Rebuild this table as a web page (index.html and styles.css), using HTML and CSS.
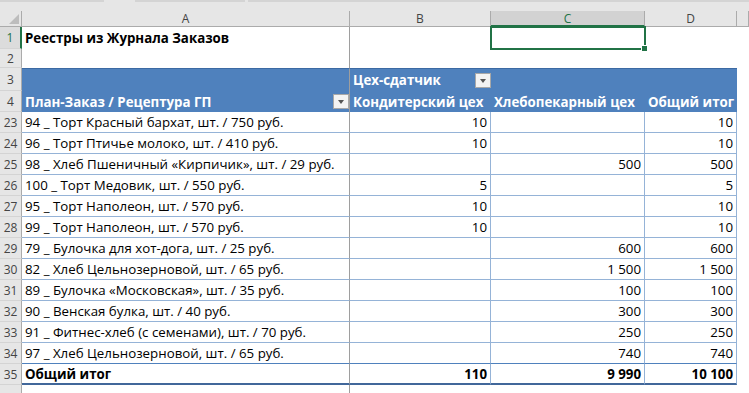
FILE: index.html
```html
<!DOCTYPE html>
<html lang="ru">
<head>
<meta charset="UTF-8" />
<title>Реестры из Журнала Заказов</title>
<link rel="stylesheet" href="styles.css">
</head>
<body>
<div class="topbar">
  <span class="seg s1"></span><span class="seg s2"></span><span class="seg s3"></span>
</div>

<div class="sheet">
  <!-- column headers -->
  <div class="corner"><svg width="22" height="16" viewBox="0 0 22 16"><polygon points="19,3 19,13 9,13" fill="#bdbdbd"/></svg></div>
  <div class="ch">A</div>
  <div class="ch">B</div>
  <div class="ch sel-col">C</div>
  <div class="ch">D</div>
  <div class="ch"></div>

  <!-- row 1 -->
  <div class="rh sel-row">1</div>
  <div class="c a title">Реестры из Журнала Заказов</div>
  <div class="c"></div>
  <div class="c cur"><div class="selbox"></div></div>
  <div class="c"></div>
  <div class="c"></div>

  <!-- row 2 -->
  <div class="rh">2</div>
  <div class="c a"></div>
  <div class="c"></div>
  <div class="c"></div>
  <div class="c"></div>
  <div class="c"></div>

  <!-- row 3 -->
  <div class="rh">3</div>
  <div class="c a hd top"></div>
  <div class="c hd top flt-cell">Цех-сдатчик<span class="flt"></span></div>
  <div class="c hd top"></div>
  <div class="c hd top"></div>
  <div class="c"></div>

  <!-- row 4 -->
  <div class="rh">4</div>
  <div class="c a hd flt-cell">План-Заказ / Рецептура ГП<span class="flt"></span></div>
  <div class="c hd">Кондитерский цех</div>
  <div class="c hd">Хлебопекарный цех</div>
  <div class="c hd">Общий итог</div>
  <div class="c"></div>

  <div class="rh">23</div>
  <div class="c a d">94 _ Торт Красный бархат, шт. / 750 руб.</div>
  <div class="c d n">10</div><div class="c d n"></div><div class="c d n">10</div><div class="c"></div>

  <div class="rh">24</div>
  <div class="c a d">96 _ Торт Птичье молоко, шт. / 410 руб.</div>
  <div class="c d n">10</div><div class="c d n"></div><div class="c d n">10</div><div class="c"></div>

  <div class="rh">25</div>
  <div class="c a d">98 _ Хлеб Пшеничный «Кирпичик», шт. / 29 руб.</div>
  <div class="c d n"></div><div class="c d n">500</div><div class="c d n">500</div><div class="c"></div>

  <div class="rh">26</div>
  <div class="c a d">100 _ Торт Медовик, шт. / 550 руб.</div>
  <div class="c d n">5</div><div class="c d n"></div><div class="c d n">5</div><div class="c"></div>

  <div class="rh">27</div>
  <div class="c a d">95 _ Торт Наполеон, шт. / 570 руб.</div>
  <div class="c d n">10</div><div class="c d n"></div><div class="c d n">10</div><div class="c"></div>

  <div class="rh">28</div>
  <div class="c a d">99 _ Торт Наполеон, шт. / 570 руб.</div>
  <div class="c d n">10</div><div class="c d n"></div><div class="c d n">10</div><div class="c"></div>

  <div class="rh">29</div>
  <div class="c a d">79 _ Булочка для хот-дога, шт. / 25 руб.</div>
  <div class="c d n"></div><div class="c d n">600</div><div class="c d n">600</div><div class="c"></div>

  <div class="rh">30</div>
  <div class="c a d">82 _ Хлеб Цельнозерновой, шт. / 65 руб.</div>
  <div class="c d n"></div><div class="c d n">1&nbsp;500</div><div class="c d n">1&nbsp;500</div><div class="c"></div>

  <div class="rh">31</div>
  <div class="c a d">89 _ Булочка «Московская», шт. / 35 руб.</div>
  <div class="c d n"></div><div class="c d n">100</div><div class="c d n">100</div><div class="c"></div>

  <div class="rh">32</div>
  <div class="c a d">90 _ Венская булка, шт. / 40 руб.</div>
  <div class="c d n"></div><div class="c d n">300</div><div class="c d n">300</div><div class="c"></div>

  <div class="rh">33</div>
  <div class="c a d">91 _ Фитнес-хлеб (с семенами), шт. / 70 руб.</div>
  <div class="c d n"></div><div class="c d n">250</div><div class="c d n">250</div><div class="c"></div>

  <div class="rh">34</div>
  <div class="c a d last">97 _ Хлеб Цельнозерновой, шт. / 65 руб.</div>
  <div class="c d n last"></div><div class="c d n last">740</div><div class="c d n last">740</div><div class="c"></div>

  <div class="rh">35</div>
  <div class="c a d total">Общий итог</div>
  <div class="c d n total">110</div><div class="c d n total">9&nbsp;990</div><div class="c d n total">10&nbsp;100</div><div class="c"></div>

  <div class="rh"></div>
  <div class="c a"></div>
  <div class="c"></div><div class="c"></div><div class="c"></div><div class="c"></div>
</div>
</body>
</html>
```

FILE: styles.css
```css
body {
  margin: 0;
  background: #fff;
  font-family: "Open Sans", "Liberation Sans", sans-serif;
  font-size: 13.3px;
  color: #000;
  overflow: hidden;
}
.topbar {
  height: 11px;
  background: #e6e6e6;
  display: flex;
  align-items: flex-start;
}
.seg {
  height: 2px;
  background: #d4d4d4;
}
.s1 { width: 104px; margin-right: 31px; }
.s2 { width: 110px; margin-right: 3px; }
.s3 { flex: 1; }

.sheet {
  display: grid;
  grid-template-columns: 22px 328px 141px 154px 92px 12px;
  grid-template-rows: 16px 22px 19px 23px 21px repeat(12, 21px) 21px 12px;
}
.sheet > div {
  box-sizing: border-box;
}
.corner {
  background: #e6e6e6;
  border-right: 1px solid #ababab;
  border-bottom: 1px solid #ababab;
}
.corner svg {
  display: block;
}
.ch {
  background: #e6e6e6;
  border-right: 1px solid #ababab;
  border-bottom: 1px solid #ababab;
  font-size: 12px;
  color: #444;
  display: flex;
  align-items: center;
  justify-content: center;
}
.ch.sel-col {
  background: #d2d2d2;
  color: #217346;
  border-bottom: 2px solid #217346;
}
.rh {
  background: #e6e6e6;
  border-right: 1px solid #ababab;
  border-bottom: 1px solid #d4d4d4;
  font-size: 12px;
  color: #444;
  display: flex;
  align-items: center;
  justify-content: center;
}
.rh.sel-row {
  background: #dcdcdc;
  color: #217346;
  border-right: 2px solid #217346;
}

.c {
  display: flex;
  align-items: center;
  padding: 0 3px;
  white-space: nowrap;
  overflow: hidden;
}
.a {
  border-right: 1px solid #9e9e9e;
}
.title {
  font-weight: bold;
}
.cur {
  position: relative;
  overflow: visible !important;
}
.selbox {
  position: absolute;
  top: -1px;
  left: -1px;
  right: -1px;
  bottom: -1px;
  border: 2px solid #217346;
}
.selbox::after {
  content: "";
  position: absolute;
  right: -4px;
  bottom: -4px;
  width: 5px;
  height: 5px;
  background: #217346;
  border: 1px solid #fff;
}

.hd {
  background: #4f81bd;
  color: #fff;
  font-weight: bold;
}
.hd.top {
  border-top: 1px solid #3c6aa3;
}
.flt-cell {
  padding-right: 0;
}
.flt {
  margin-left: auto;
  width: 16px;
  height: 15px;
  box-sizing: border-box;
  background: #f3f3f3;
  border: 1px solid #a8a8a8;
  position: relative;
}
.flt::after {
  content: "";
  position: absolute;
  left: 4px;
  top: 5px;
  border-left: 3px solid transparent;
  border-right: 3px solid transparent;
  border-top: 4px solid #555;
}

.d {
  border-bottom: 1px solid #95b3d7;
}
.d.n {
  justify-content: flex-end;
  border-right: 1px solid #95b3d7;
}
.d.a {
  border-right: 1px solid #9e9e9e;
}
.d.last {
  border-bottom-color: #4f81bd;
}
.total {
  font-weight: bold;
  border-bottom: 2px solid #41679a;
}
```
